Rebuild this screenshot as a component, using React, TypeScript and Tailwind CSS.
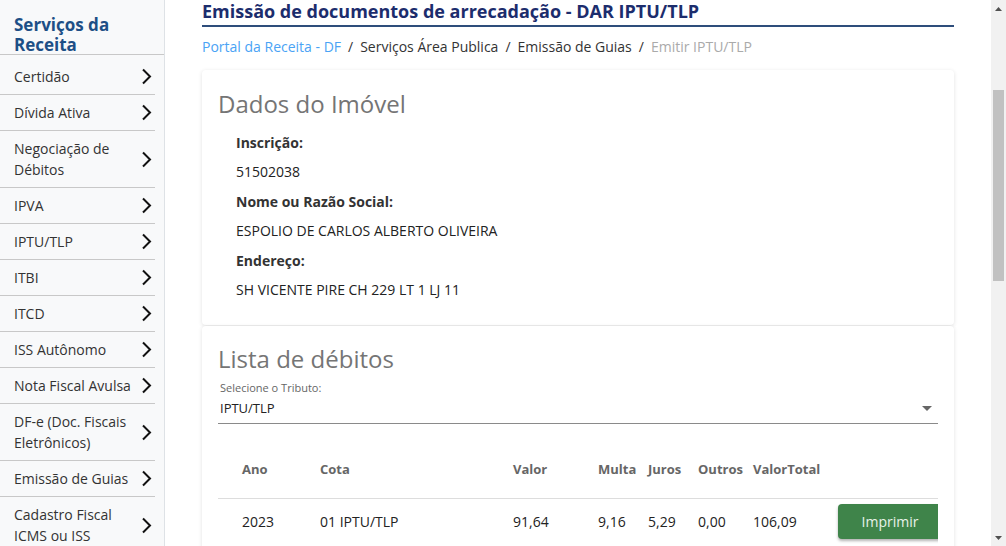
import React from "react";

const font = { fontFamily: '"Open Sans", "Noto Sans", sans-serif' };

const items: string[][] = [
  ["Certidão"],
  ["Dívida Ativa"],
  ["Negociação de", "Débitos"],
  ["IPVA"],
  ["IPTU/TLP"],
  ["ITBI"],
  ["ITCD"],
  ["ISS Autônomo"],
  ["Nota Fiscal Avulsa"],
  ["DF-e (Doc. Fiscais", "Eletrônicos)"],
  ["Emissão de Guias"],
  ["Cadastro Fiscal", "ICMS ou ISS"],
];

function Chevron() {
  return (
    <svg width="11" height="17" viewBox="0 0 11 17" className="shrink-0">
      <polyline points="2,1.5 9,8.5 2,15.5" fill="none" stroke="#111" strokeWidth="2" />
    </svg>
  );
}

function Field({ label, value }: { label: string; value: string }) {
  return (
    <div className="flex flex-col">
      <div className="h-[30px] flex items-center font-bold text-[14px] text-[#333]">{label}</div>
      <div className="h-[29px] flex items-center text-[14px] text-[#222]">{value}</div>
    </div>
  );
}

export default function App() {
  return (
    <div className="flex h-[546px] w-[1006px] overflow-hidden bg-white text-[#333]" style={font}>
      {/* Sidebar */}
      <aside className="w-[165px] shrink-0 bg-[#f8f9fa] border-r border-[#dee2e6] flex flex-col">
        <div className="pl-[14px] pt-[15px] h-[55px] border-b border-[#c8c8c8] text-[17px] leading-[20px] font-bold text-[#1d4f86]">
          <div>Serviços da</div>
          <div>Receita</div>
        </div>
        <div className="pt-[4px] pr-[9px]">
          {items.map((lines, i) => (
            <div
              key={i}
              className="flex items-center justify-between pl-[14px] pr-[3px] py-[7px] border-b border-[#c8c8c8] text-[14px] leading-[21px] text-[#333]"
            >
              <div>
                {lines.map((l, j) => (
                  <div key={j}>{l}</div>
                ))}
              </div>
              <Chevron />
            </div>
          ))}
        </div>
      </aside>

      {/* Main */}
      <main className="flex-1 min-w-0 pl-[37px] pr-[37px]">
        <div className="h-[27px] border-b-2 border-[#2e4d7b] flex items-start">
          <h1 className="text-[18px] leading-[22px] font-bold text-[#1c2d6d]">
            Emissão de documentos de arrecadação - DAR IPTU/TLP
          </h1>
        </div>
        <nav className="h-[38px] flex items-center text-[14px]">
          <span className="text-[#4aa3f5]">Portal da Receita - DF</span>
          <span className="px-[7px] text-[#333]">/</span>
          <span className="text-[#333]">Serviços Área Publica</span>
          <span className="px-[7px] text-[#333]">/</span>
          <span className="text-[#333]">Emissão de Guias</span>
          <span className="px-[7px] text-[#333]">/</span>
          <span className="text-[#aaa]">Emitir IPTU/TLP</span>
        </nav>

        {/* Card 1 */}
        <section className="mt-[5px] rounded-[4px] bg-white shadow-[0_1px_4px_rgba(0,0,0,0.12)] h-[255px] pt-[18px] px-[16px]">
          <h2 className="text-[24px] leading-[32px] text-[#757575]">Dados do Imóvel</h2>
          <div className="pl-[18px] pt-[7px]">
            <Field label="Inscrição:" value="51502038" />
            <Field label="Nome ou Razão Social:" value="ESPOLIO DE CARLOS ALBERTO OLIVEIRA" />
            <Field label="Endereço:" value="SH VICENTE PIRE CH 229 LT 1 LJ 11" />
          </div>
        </section>

        {/* Card 2 */}
        <section className="mt-[1px] rounded-[4px] bg-white shadow-[0_1px_4px_rgba(0,0,0,0.12)] h-[300px] pt-[17px] px-[16px] overflow-hidden">
          <h2 className="text-[24px] leading-[32px] text-[#757575]">Lista de débitos</h2>
          <div className="mt-[6px] text-[11px] leading-[14px] text-[#666] pl-[2px]">Selecione o Tributo:</div>
          <div className="flex items-center justify-between h-[29px] border-b border-[#8a8a8a] pl-[2px] pr-[6px] pb-[1px]">
            <span className="text-[13px] text-[#222]">IPTU/TLP</span>
            <svg width="10" height="6" viewBox="0 0 10 6">
              <polygon points="0,0 10,0 5,5" fill="#666" />
            </svg>
          </div>

          <div className="w-[720px] overflow-hidden">
            <div className="mt-[17px] grid grid-cols-[102px_193px_85px_50px_50px_55px_85px_100px] h-[58px] items-center border-b border-[#ddd] text-[13px] font-bold text-[#666]">
              <div className="pl-[24px]">Ano</div>
              <div>Cota</div>
              <div>Valor</div>
              <div>Multa</div>
              <div>Juros</div>
              <div>Outros</div>
              <div>ValorTotal</div>
              <div></div>
            </div>
            <div className="grid grid-cols-[102px_193px_85px_50px_50px_55px_85px_100px] h-[45px] items-center text-[14px] text-[#222]">
              <div className="pl-[24px]">2023</div>
              <div>01 IPTU/TLP</div>
              <div>91,64</div>
              <div>9,16</div>
              <div>5,29</div>
              <div>0,00</div>
              <div>106,09</div>
              <div>
                <button className="w-[104px] h-[35px] rounded-[4px] bg-[#3f844a] text-[#e8f2e9] text-[14px] shadow-[0_2px_3px_rgba(0,0,0,0.3)]">
                  Imprimir
                </button>
              </div>
            </div>
          </div>
        </section>
      </main>

      {/* Scrollbar */}
      <div className="w-[15px] shrink-0 bg-[#f1f1f1] flex flex-col items-center">
        <div className="h-[17px] flex items-center justify-center">
          <svg width="7" height="4" viewBox="0 0 7 4">
            <polygon points="0,4 7,4 3.5,0" fill="#505050" />
          </svg>
        </div>
        <div className="mt-[73px] w-[11px] h-[191px] bg-[#c1c1c1]" />
        <div className="flex-1" />
        <div className="h-[17px] flex items-center justify-center">
          <svg width="7" height="4" viewBox="0 0 7 4">
            <polygon points="0,0 7,0 3.5,4" fill="#505050" />
          </svg>
        </div>
      </div>
    </div>
  );
}
